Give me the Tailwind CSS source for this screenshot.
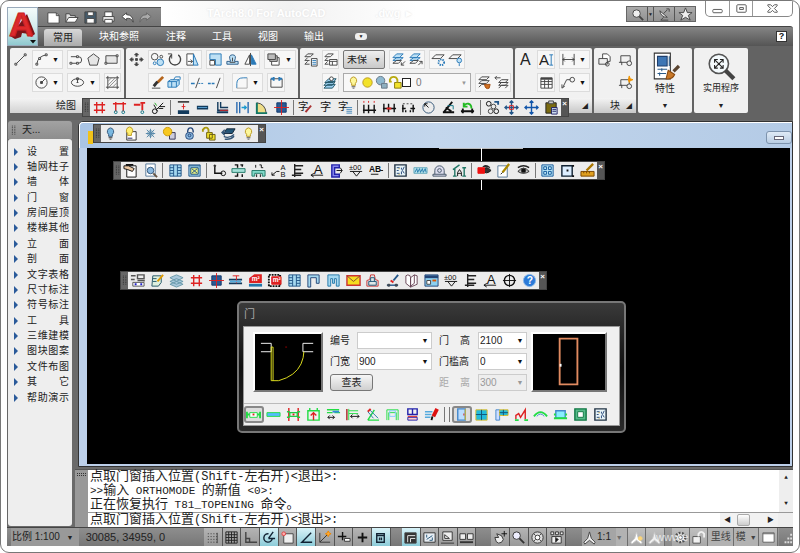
<!DOCTYPE html>
<html lang="zh-CN">
<head>
    <meta charset="UTF-8">
    <meta name="viewport" content="width=device-width, initial-scale=1.0">
    <title>TArch 8.0 For AutoCAD</title>
    <script src="https://cdn.jsdelivr.net/npm/@tailwindcss/browser@4"></script>
</head>
<body class="bg-white font-['Liberation_Sans','Noto_Sans_CJK_SC',sans-serif] text-[10px] leading-none text-[#222]">

<div class="flex h-screen min-h-[553px] flex-col overflow-hidden rounded-[9px] border border-[#777] bg-white px-[6px] pb-[6px]">

    <!-- Title bar and ribbon tabs -->
    <header class="flex shrink-0">
        <button aria-label="应用程序菜单" class="mt-[6px] h-[39px] w-[31px] shrink-0 border border-[#9ab] bg-linear-to-b from-[#f4fbfb] via-[#d5ecee] to-[#8fc9cf]">
            <svg viewBox="0 0 29 37" class="h-[37px] w-[29px]" font-family="Liberation Sans" font-weight="bold" font-size="34">
                <path d="M2 28l5 3 6-2 1-4 7 1 2 3 4-3-8-20z" fill="#7c1418"/>
                <text x="1" y="28" fill="#dd2a2c" stroke="#c92024" stroke-width="1">A</text>
                <path d="M22 32h6l-3 3.500z" fill="#111"/>
            </svg>
        </button>
        <div class="min-w-0 flex-1">
            <div class="flex h-[25px] items-start">
                <div data-tools="new open save print undo redo" class="mt-[6px] flex h-[19px] w-[123px] shrink-0 items-center border-t border-[#555] bg-linear-to-b from-[#8b8b8b] to-[#777] px-[6px]"></div>
                <div class="flex h-[25px] flex-1 items-center bg-linear-to-r from-white via-[#f2f2f2] to-white pl-[46px] text-[11px] font-bold text-white">
                    <span class="text-shadow-[0_0_2px_#ddd]">TArch8.0 For AutoCAD</span>
                    <span class="ml-auto pr-1 text-shadow-[0_0_2px_#ddd]">.dwg &nbsp;▸</span>
                </div>
                <div class="flex-1"></div>
                <div class="mt-[5px] flex h-[16px] w-[70px] shrink-0 divide-x divide-[#555] border border-[#666] bg-linear-to-b from-[#aaa] to-[#929292]">
                    <button aria-label="搜索" data-icon="search" class="flex flex-1 items-center justify-center"></button>
                    <button aria-label="搜索选项" class="w-[6px] text-[5px]">▼</button>
                    <button aria-label="通讯中心" data-icon="dish" class="flex flex-1 items-center justify-center"></button>
                    <button aria-label="收藏夹" data-icon="star" class="flex flex-1 items-center justify-center"></button>
                </div>
                <div class="ml-[9px] flex h-[16px] w-[88px] shrink-0 divide-x divide-[#999] rounded-b-[5px] border border-t-0 border-[#888] bg-white">
                    <button aria-label="最小化" data-icon="wmin" class="flex w-[24px] items-center justify-center"></button>
                    <button aria-label="还原" data-icon="wmax" class="flex w-[23px] items-center justify-center"></button>
                    <button aria-label="关闭" data-icon="wclose" class="flex flex-1 items-center justify-center"></button>
                </div>
            </div>
            <nav class="flex h-[20px] items-center rounded-tr-[3px] border-t border-[#444] bg-linear-to-b from-[#858585] to-[#555] pl-[6px] text-white">
                <button class="mt-[2px] h-[18px] w-[38px] rounded-t-[3px] bg-linear-to-b from-[#d8d8d8] to-[#a9a9a9] text-[#222]">常用</button>
                <button class="ml-[17px]">块和参照</button>
                <button class="ml-[27px]">注释</button>
                <button class="ml-[26px]">工具</button>
                <button class="ml-[26px]">视图</button>
                <button class="ml-[26px]">输出</button>
                <button aria-label="最小化功能区" class="ml-[31px] h-[7px] w-[12px] rounded-[3px] bg-[#eee] text-[5px] leading-[7px] text-[#222]">▼</button>
                <button aria-label="帮助" class="mr-[6px] ml-auto size-[11px] border border-[#333] bg-white text-[9px] leading-[9px] font-bold text-[#111]">?</button>
            </nav>
        </div>
    </header>

    <!-- Ribbon -->
    <section class="relative flex h-[74px] shrink-0 items-start gap-[2px] bg-[#636363] pt-[2px] pl-[3px]">
        <div class="h-[65px] w-[114px] shrink-0 rounded-[2px] bg-[#f1f1f1]">
            <div class="flex h-[50px] flex-col gap-1 pt-[2px] pl-[2px]">
                <div class="flex gap-1">
                    <div data-tools="line" class="flex h-[19px] w-[16px]"></div>
                    <div data-tools="arc v" class="flex h-[19px] w-[31px] border border-[#dcdcdc] bg-[#f7f7f7]"></div>
                    <div data-tools="pline polygon rect" class="flex h-[19px] w-[54px] border border-[#dcdcdc] bg-[#f7f7f7]"></div>
                </div>
                <div class="flex gap-1 pl-[20px]">
                    <div data-tools="circle v" class="flex h-[19px] w-[31px] border border-[#dcdcdc] bg-[#f7f7f7]"></div>
                    <div data-tools="ellipse v" class="flex h-[19px] w-[33px] border border-[#dcdcdc] bg-[#f7f7f7]"></div>
                    <div data-tools="hatch" class="flex h-[19px] w-[17px] border border-[#dcdcdc] bg-[#f7f7f7]"></div>
                </div>
            </div>
            <div class="flex h-[15px] items-center bg-linear-to-b from-[#f4f4f4] to-[#d2d2d2] pl-[46px]">绘图</div>
        </div>
        <div class="h-[65px] w-[172px] shrink-0 rounded-[2px] bg-[#f1f1f1]">
            <div class="flex flex-col gap-1 pt-[2px] pl-[2px]">
                <div class="flex gap-1">
                    <div data-tools="move" class="flex h-[19px] w-[16px]"></div>
                    <div data-tools="copy rotate stretch" class="flex h-[19px] w-[54px] border border-[#dcdcdc] bg-[#f7f7f7]"></div>
                    <div data-tools="scale offset mirror" class="flex h-[19px] w-[54px] border border-[#dcdcdc] bg-[#f7f7f7]"></div>
                    <div data-tools="order v" class="flex h-[19px] w-[32px] border border-[#dcdcdc] bg-[#f7f7f7]"></div>
                </div>
                <div class="flex gap-1 pl-[20px]">
                    <div data-tools="erase explode" class="flex h-[19px] w-[36px] border border-[#dcdcdc] bg-[#f7f7f7]"></div>
                    <div data-tools="trim extend" class="flex h-[19px] w-[36px] border border-[#dcdcdc] bg-[#f7f7f7]"></div>
                    <div data-tools="fillet v" class="ml-1 flex h-[19px] w-[31px] border border-[#dcdcdc] bg-[#f7f7f7]"></div>
                    <div data-tools="break" class="flex h-[19px] w-[18px] border border-[#dcdcdc] bg-[#f7f7f7]"></div>
                </div>
            </div>
        </div>
        <div class="h-[65px] w-[213px] shrink-0 rounded-[2px] bg-[#f1f1f1]">
            <div class="flex flex-col gap-1 pt-[2px] pl-[2px]">
                <div class="flex gap-1">
                    <div data-tools="layerprop" class="flex h-[19px] w-[16px]"></div>
                    <div data-tools="layerstate" class="flex h-[19px] w-[17px] border border-[#dcdcdc] bg-[#f7f7f7]"></div>
                    <div class="relative h-[19px] w-[42px]">
                        <select aria-label="图层状态" class="h-full w-full appearance-none rounded-[2px] border border-[#777] bg-linear-to-b from-[#eee] to-[#c9c9c9] pl-[3px] text-[10px]"><option>未保</option></select>
                        <span class="pointer-events-none absolute top-[6px] right-[4px] text-[7px]">▼</span>
                    </div>
                    <div data-tools="layerin layerout" class="flex h-[19px] w-[36px] border border-[#dcdcdc] bg-[#f7f7f7]"></div>
                    <div data-tools="layerfrz layeroff" class="flex h-[19px] w-[36px] border border-[#dcdcdc] bg-[#f7f7f7]"></div>
                </div>
                <div class="flex gap-1 pl-[20px]">
                    <div data-tools="layerset" class="flex h-[19px] w-[17px] border border-[#dcdcdc] bg-[#f7f7f7]"></div>
                    <button aria-label="图层" class="flex h-[19px] w-[128px] items-center border border-[#aaa] bg-[#f8f8f8] pl-[2px] text-[#777]">
                        <span data-icon="bulb" class="-mr-px"></span><span data-icon="sun" class="-mr-px"></span><span data-icon="sunvp" class="-mr-px"></span><span data-icon="lock" class="-mr-px"></span>
                        <span class="size-[9px] border border-[#222] bg-white"></span>
                        <span class="ml-[5px]">0</span>
                        <span class="mr-[3px] ml-auto text-[6px] text-[#999]">▼</span>
                    </button>
                    <div data-tools="layermatch layerprev" class="flex h-[19px] w-[36px] border border-[#dcdcdc] bg-[#f7f7f7]"></div>
                </div>
            </div>
        </div>
        <div class="h-[65px] w-[77px] shrink-0 rounded-[2px] bg-[#f1f1f1]">
            <div class="flex h-[50px] flex-col gap-1 pt-[2px] pl-[2px]">
                <div class="flex gap-1">
                    <div data-tools="text" class="flex h-[19px] w-[16px]"></div>
                    <div data-tools="mtext" class="flex h-[19px] w-[18px] border border-[#dcdcdc] bg-[#f7f7f7]"></div>
                    <div data-tools="dim v" class="flex h-[19px] w-[31px] border border-[#dcdcdc] bg-[#f7f7f7]"></div>
                </div>
                <div class="flex gap-1 pl-[20px]">
                    <div data-tools="table" class="flex h-[19px] w-[18px] border border-[#dcdcdc] bg-[#f7f7f7]"></div>
                    <div data-tools="leader v" class="flex h-[19px] w-[31px] border border-[#dcdcdc] bg-[#f7f7f7]"></div>
                </div>
            </div>
            <div class="flex h-[15px] items-center justify-end bg-linear-to-b from-[#f4f4f4] to-[#c8c8c8] pr-[4px] text-[6px]">◢</div>
        </div>
        <div class="h-[65px] w-[42px] shrink-0 rounded-[2px] bg-[#f1f1f1]">
            <div class="grid h-[50px] grid-cols-2 gap-y-1 pt-[2px] pb-[6px]">
                <div data-tools="blkins" class="flex"></div>
                <div data-tools="blkmake" class="flex"></div>
                <div data-tools="blkedit" class="col-start-2 flex"></div>
            </div>
            <div class="flex h-[15px] items-center justify-end gap-[6px] bg-linear-to-b from-[#f4f4f4] to-[#c8c8c8] pr-[4px]">块<span class="text-[6px]">◢</span></div>
        </div>
        <button class="flex h-[65px] w-[54px] shrink-0 flex-col items-center rounded-[2px] bg-[#f1f1f1] pt-[3px]">
            <span data-icon="props" data-size="big"></span>
            <span class="mt-[3px]">特性</span>
            <span class="mt-[8px] text-[7px]">▼</span>
        </button>
        <button class="flex h-[65px] w-[54px] shrink-0 flex-col items-center rounded-[2px] bg-[#f1f1f1] pt-[3px]">
            <span data-icon="util" data-size="big"></span>
            <span class="mt-[3px] text-[9px]">实用程序</span>
            <span class="mt-[9px] text-[7px]">▼</span>
        </button>

        <div data-float="grid gridred wallred branch | wallmid wall wallcorner wallmove door column | zibrush zi zitable | dimred dimmid dimbrk dimrad dimang dimloop | chain moveplus movearrow paste" class="absolute top-[52px] left-[75px] z-10 flex h-[19px] w-[487px] border border-[#444] bg-[#ececec]"></div>
    </section>

    <div class="flex min-h-0 flex-1 bg-[#6a6a6a]">
        <!-- Screen menu -->
        <aside class="flex w-[65px] shrink-0 flex-col border-l border-[#666] pt-px pb-px">
            <h2 class="flex h-[18px] items-center gap-[5px] rounded-t-[3px] bg-linear-to-b from-[#a2a2a2] to-[#8d8d8d] pl-[3px]"><span data-icon="grip" data-size="grip"></span>天...</h2>
            <div class="flex-1 rounded-[3px] bg-[#eee] pt-[5px]">
                <ul id="menu" class="flex h-[261px] flex-col justify-between"></ul>
            </div>
        </aside>

        <main class="flex min-w-0 flex-1 flex-col pl-[3px]">
            <!-- Drawing window -->
            <div class="relative mt-px ml-[3px] min-h-0 flex-1 rounded-tl-[5px] border border-[#333] bg-[#bdd0ea]">
                <div class="flex h-[26px] items-center justify-end rounded-tl-[4px] border-t border-l border-white bg-linear-to-r from-[#a9c4e4] via-[#c3d6ec] to-[#b4cbe6]">
                    <span class="mt-[4px] mr-auto ml-[8px] h-[13px] w-[5px] bg-[#f1c21a]"></span>
                    <button aria-label="最小化图形" class="mt-[4px] flex h-[13px] w-[26px] items-center justify-center rounded-[3px] border border-[#7d93ad] bg-linear-to-b from-[#dfeaf6] to-[#b9cde3]"><span class="h-[4px] w-[10px] border border-[#667] bg-white"></span></button>
                </div>
                <div class="absolute top-[26px] right-[2px] bottom-[2px] left-[8px] bg-black">
                    <!-- crosshair -->
                    <div class="absolute top-0 left-[50%] h-px w-[84px] bg-[#bbb]"></div>
                    <div class="absolute top-0 left-[56%] h-[42px] w-px bg-white"></div>
                </div>

                <div data-float="bulbblue bulbbox snow sunbox lockblue locky layerback bulb" class="absolute top-[2px] left-[14px] flex h-[19px] w-[173px] border border-[#444] bg-[#ececec]"></div>
                <div data-float="hand preview | tblblue boxblue | node cutwall bridge leadab ladder arrowa doorpur elev ab | tblbox wave arch house | eyered note eye | maze frame rulerpen" class="absolute top-[39px] left-[34px] flex h-[19px] w-[492px] border border-[#444] bg-[#ececec]"></div>
                <div data-float="listbox notegreen layers grid column wallmove2 m2 m2box tblblue wallu wallm envelope stamp brushdot book tbl3 elev ladder arrowa north help" class="absolute top-[149px] left-[41px] flex h-[19px] w-[427px] border border-[#444] bg-[#ececec]"></div>

                <!-- Door dialog -->
                <div role="dialog" aria-label="门" class="absolute top-[179px] left-[158px] w-[389px] rounded-[5px] border-2 border-[#777] bg-linear-to-b from-[#3a3a3a] via-[#111] to-[#2a2a2a] px-1 pb-[5px]">
                    <h3 class="flex h-[23px] items-center pl-px text-[11px] text-[#aaa]">门</h3>
                    <div class="border border-[#999] bg-[#f0f0f0]">
                        <div class="flex h-[76px] items-start pt-[5px] pl-[9px]">
                            <svg viewBox="0 0 70 60" class="h-[60px] w-[70px] shrink-0 border-2 border-t-white border-r-[#777] border-b-[#777] border-l-white bg-black" fill="none">
                                <path d="M6 10h11v9H6M62 10H51v9h11" stroke="#fff"/>
                                <path d="M17 14v36h8q18-5 24-18 3-7 3-13M19 14v36M17 14h2" stroke="#e8e820"/>
                                <path d="M32 14h2" stroke="#900"/>
                            </svg>
                            <div class="ml-[7px] grid grid-cols-[27px_75px] gap-y-1">
                                <label for="no" class="self-center">编号</label>
                                <div data-combo="no" data-value="" class="relative h-[17px]"></div>
                                <label for="width" class="self-center">门宽</label>
                                <div data-combo="width" data-value="900" class="relative h-[17px]"></div>
                                <button class="col-span-2 h-[17px] w-[43px] rounded-[3px] border border-[#777] bg-linear-to-b from-[#f6f6f6] to-[#d0d0d0]">查表</button>
                            </div>
                            <div class="ml-[7px] grid grid-cols-[39px_49px] gap-y-1">
                                <label for="height" class="mr-[8px] flex justify-between self-center"><span>门</span><span>高</span></label>
                                <div data-combo="height" data-value="2100" class="relative h-[17px]"></div>
                                <label for="sill" class="self-center">门槛高</label>
                                <div data-combo="sill" data-value="0" class="relative h-[17px]"></div>
                                <label for="dist" class="mr-[8px] flex justify-between self-center text-[#aaa]"><span>距</span><span>离</span></label>
                                <div data-combo="dist" data-value="300" data-off="1" class="relative h-[17px]"></div>
                            </div>
                            <svg viewBox="0 0 76 60" class="ml-[4px] h-[60px] w-[76px] shrink-0 border-2 border-t-white border-r-[#777] border-b-[#777] border-l-white bg-black" fill="none">
                                <path d="M28 5h19v49H28z" stroke="#e08a60" stroke-width="2"/>
                                <path d="M28 32h2v3h-2z" fill="#fff"/>
                            </svg>
                        </div>
                        <div data-tools="*d1 d2 d3 d4 d5 d6 d7 d8 d9 d10 | | *w1 w2 w3 w4 w5 w6 w7 tblbox" class="flex h-[22px] w-[366px] items-center border-t border-[#bbb]"></div>
                    </div>
                </div>
            </div>

            <!-- Command line -->
            <div class="mt-[2px] flex h-[58px] shrink-0 border-t border-[#555]">
                <div class="w-[13px] shrink-0 bg-[#999] pt-[3px] pl-[2px]"><div class="h-[3px] w-[9px] border-y border-dotted border-[#333]"></div></div>
                <div class="flex min-w-0 flex-1 flex-col bg-white font-['Liberation_Mono','Noto_Sans_CJK_SC',monospace] text-[13px] leading-[14px]">
                    <div class="flex h-[42px]">
                        <div class="flex-1 pl-[2px]">
                            <p class="h-[14px] whitespace-pre">点取门窗插入位置<span class="text-[12px]">(Shift-</span>左右开<span class="text-[12px]">)&lt;</span>退出<span class="text-[12px]">&gt;:</span></p>
                            <p class="h-[14px] whitespace-pre"><span class="text-[11px]">&gt;&gt;</span>输入<span class="text-[11px]"> ORTHOMODE </span>的新值<span class="text-[11px]"> &lt;0&gt;:</span></p>
                            <p class="h-[14px] whitespace-pre">正在恢复执行<span class="text-[11px]"> T81_TOPENING </span>命令。</p>
                        </div>
                        <div class="flex w-[14px] flex-col items-center justify-between bg-[#eee] py-1 text-[6px] leading-[8px]"><span>▲</span><span>▼</span></div>
                    </div>
                    <div class="flex h-[15px] border-t border-[#999]">
                        <label for="cmd" class="pl-[2px] whitespace-pre">点取门窗插入位置<span class="text-[12px]">(Shift-</span>左右开<span class="text-[12px]">)&lt;</span>退出<span class="text-[12px]">&gt;:</span></label>
                        <input id="cmd" type="text" class="min-w-0 flex-1 outline-none">
                        <div class="flex w-[58px] items-center justify-between bg-[#f2f2f2] px-1 text-[7px]"><span>◀</span><span class="h-[12px] w-[13px] rounded-[2px] border border-[#aaa] bg-linear-to-b from-white to-[#ccc]"></span><span class="pl-3">▶</span></div>
                        <div class="w-[15px] bg-[#eee]"></div>
                    </div>
                </div>
            </div>
        </main>
    </div>

    <!-- Status bar -->
    <footer class="relative flex h-[19px] shrink-0 items-center border-t border-[#444] bg-linear-to-b from-[#8e8e8e] to-[#777]">
        <button class="ml-[4px] h-full w-[68px] bg-[#999] pl-px text-left">比例 1:100 <span class="pl-[4px] text-[7px]">▼</span></button>
        <span class="w-[126px] pl-[7px] text-[11px]">30085, 34959, 0</span>
        <div data-status="snap sgrid ortho *polar osnap *otrack ducs dyn lwt *qp" class="flex h-full w-[188px]"></div>
        <div data-status="*model layout1 qlayout qdraw" class="ml-[11px] flex h-full w-[75px]"></div>
        <div data-status="pan zoom wheel motion" class="ml-[15px] flex h-full w-[75px]"></div>
        <button class="ml-[16px] flex h-full w-[46px] items-center border-r border-[#555] bg-[#a5a5a5]"><span data-icon="anno"></span>1:1<span class="ml-auto pr-1 text-[7px] text-[#555]">▼</span></button>
        <div data-status="annobulb annoadd" class="flex h-full w-[37px]"></div>
        <div data-status="gear slock" class="ml-[7px] flex h-full w-[37px]"></div>
        <button class="h-full w-[26px] border-r border-[#555] bg-[#a5a5a5]">里线</button>
        <button class="h-full w-[25px] border-r border-[#555] bg-[#a5a5a5] whitespace-nowrap">模<span class="pl-1 text-[7px]">▼</span></button>
        <div data-status="clean" class="flex h-full w-[19px]"></div>
        <span data-icon="resize" class="ml-auto"></span>
        <!-- watermark -->
        <div class="pointer-events-none absolute top-0 right-[14px] flex h-[18px] w-[163px] items-center bg-white/15 pl-[40px] text-[11px] text-white/70">www.e</div>
    </footer>
</div>

<script>
    // Icon artwork, 16x16 unless noted
    const icons = {
        new: '<path d="M2 3h9l3 3v8H2z" fill="#fff"/><path d="M11 3v3h3"/>',
        open: '<path d="M2 13V4h4l1 2h5v2" fill="#ddd"/><path d="M2 13l3-5h10l-3 5z" fill="#fff"/>',
        save: '<path d="M2 2h12v12H2z" fill="#445b6c"/><path d="M5 2h6v4H5zM4 9h8v5H4z" fill="#fff"/>',
        print: '<path d="M4 7V2h8v5" fill="#fff"/><path d="M2 7h12v5H2z" fill="#eee"/><path d="M4 10h8v4H4z" fill="#fff"/>',
        undo: '<path d="M7 3L2 7l5 4V9q5-1 7 4 0-8-7-8z" fill="#fff"/>',
        redo: '<path d="M9 3l5 4-5 4V9q-5-1-7 4 0-8 7-8z" fill="#aaa" stroke="#666"/>',
        search: '<circle cx="7" cy="7" r="4" fill="#eee"/><path d="M10 10l4 4" stroke-width="2"/>',
        dish: '<path d="M3 4q1 7 8 7z" fill="#eee"/><path d="M7 7l4-4M10 2h3v3M7 11l-3 3h8"/>',
        star: '<path d="M8 1l2 5h5l-4 3 2 5-5-3-5 3 2-5-4-3h5z" fill="#eee"/>',
        wmin: '<rect x="3" y="9" width="10" height="3.500" rx="1" stroke="#555"/>',
        wmax: '<rect x="3" y="4" width="10" height="8" rx="1" stroke="#555"/><path d="M6 7h4v2H6z" stroke="#555"/>',
        wclose: '<path d="M3 4h3l2 2 2-2h3v1l-3 3 3 3v1h-3l-2-2-2 2H3v-1l3-3-3-3z" stroke="#555"/>',
        grip: '<path d="M1 2v12M4 2v12" stroke="#222" stroke-dasharray="1 1"/>',
        line: '<path d="M3 13L13 3"/><path d="M2 12h2v2H2zM12 2h2v2h-2z" fill="#fff"/>',
        arc: '<path d="M3 13Q4 4 14 3"/><path d="M2 12h2v2H2zM5 6h2v2H5zM12 2h2v2h-2z" fill="#fff"/>',
        pline: '<path d="M2 5h8a3.500 3.500 0 010 7H3"/><path d="M1 11h2v2H1zM8 4h2v2H8zM8 11h2v2H8z" fill="#fff"/>',
        polygon: '<path d="M8 2l6 4.500L12 14H4L2 6.500z" fill="#e6e6e6"/>',
        rect: '<path d="M2 4h12v8H2z" fill="#e6e6e6"/><path d="M1 11h2v2H1zM13 3h2v2h-2z" fill="#fff"/>',
        circle: '<circle cx="8" cy="8" r="6"/><path d="M8 8l4-4"/><path d="M7 7h2v2H7z" fill="#444"/>',
        ellipse: '<ellipse cx="8" cy="8" rx="6.500" ry="4"/><path d="M8 4v4M7 8h2M7 3h2v2H7z"/>',
        hatch: '<path d="M3 1v14M13 1v14M1 3h14M1 13h14"/><path d="M3 7l4-4M3 11l8-8M4 13l9-9M8 13l5-5" stroke="#888"/>',
        move: '<path d="M8 2v3M8 11v3M2 8h3M11 8h3" stroke-width="2"/><path d="M6 3l2-2 2 2zM6 13l2 2 2-2zM3 6L1 8l2 2zM13 6l2 2-2 2zM7 7h2v2H7z" fill="#444"/>',
        copy: '<circle cx="5" cy="5" r="3.500"/><circle cx="12" cy="5" r="1.500"/><circle cx="5" cy="12" r="1.500" stroke="#2a7ab8"/><circle cx="11" cy="11" r="3.500" fill="#bde0f5" stroke="#2a7ab8"/>',
        rotate: '<path d="M5 3a6 6 0 107 0" stroke-width="1.500"/><path d="M5 7V2H1" />',
        stretch: '<path d="M2 2h7v12H2z" fill="#fff"/><path d="M9 2l5 12H9z" fill="#bde0f5" stroke="#2a7ab8"/><path d="M3 10h5M6 8l2 2-2 2"/>',
        scale: '<path d="M2 2h12v12H8V8H2z" fill="#bde0f5" stroke="#2a7ab8"/><path d="M2 9h5v5H2z" fill="#fff"/>',
        offset: '<path d="M2 13h12v-3h-4q3-7-2-7T6 10H2z" fill="#bde0f5" stroke="#2a5a88"/><path d="M5 11h6M8 6v4"/>',
        mirror: '<path d="M7 3v10H2z" fill="#fff"/><path d="M9 3v10h5z" fill="#2a7ab8" stroke="#2a7ab8"/><path d="M8 1v14"/>',
        order: '<path d="M6 6h8v8H6z" fill="#fff"/><path d="M4 4h8v6H4z" fill="#bbb"/><path d="M2 2h8v6H2z" fill="#bbb"/>',
        erase: '<path d="M14 2L8 8" stroke="#b5651d" stroke-width="3"/><path d="M8 7l-4 5" stroke="#333" stroke-width="3"/><path d="M2 14h9"/>',
        explode: '<path d="M1 7l3-2h9v5l-3 3H1z" fill="#bde0f5" stroke="#2a7ab8"/><path d="M1 7h9v6M5 7v6M10 7l3-2M7 5l2-3h5v3" stroke="#2a7ab8"/>',
        trim: '<path d="M1 9h4" stroke="#2a7ab8" stroke-width="1.500"/><path d="M10 3L6 14"/><path d="M9 9h6" stroke-dasharray="2 1" stroke="#2a7ab8"/>',
        extend: '<path d="M1 9h8" stroke-dasharray="3 1" stroke="#2a7ab8" stroke-width="1.500"/><path d="M14 3l-4 11"/>',
        fillet: '<path d="M3 14V9q0-6 7-6h4" stroke="#2a7ab8"/><path d="M3 14h11V3" stroke="#aaa"/>',
        break: '<path d="M2 13V4h12v9z"/><path d="M2 4h3M11 4h3M5 2v4M11 2v4" stroke="#2a7ab8" stroke-width="2"/>',
        layerprop: '<path d="M2 5l3-3h6L8 5zM2 9l3-3M2 9h5M2 13l3-3M2 13h5"/><path d="M9 7h6v8H9z" fill="#fff"/><path d="M10 9h4M10 11h4M10 13h4" stroke="#2a7ab8"/>',
        layerstate: '<path d="M2 5l3-3h6L8 5zM2 9l3-3M2 9h4M2 13l3-3M2 13h4"/><path d="M7 8h8v6H7z" fill="#fff"/><path d="M7 10h8M10 10v4"/>',
        layerin: '<path d="M2 6l4-4h7L9 6zM2 9l4-3h7L9 9z" fill="#bde0f5" stroke="#2a7ab8"/><path d="M2 12l4-3h5l-3 3zM15 10l-4 4M11 11v3h3"/>',
        layerout: '<path d="M2 6l4-4h7L9 6zM2 9l4-3h7L9 9z" fill="#bde0f5" stroke="#2a7ab8"/><path d="M2 12l4-3h5l-3 3zM11 14l4-4M12 10h3v3"/>',
        layerfrz: '<path d="M1 7l4-4h9l-4 4z"/><circle cx="11" cy="11" r="3" stroke="#2a7ab8" stroke-dasharray="1.500 1" stroke-width="2"/>',
        layeroff: '<path d="M1 7l4-4h9l-4 4z"/><circle cx="12" cy="9" r="2.500" fill="#bde0f5" stroke="#2a7ab8"/><path d="M12 12v3" stroke="#2a7ab8"/>',
        layerset: '<path d="M1 14l4-4h8l-3 4zM1 11l4-4h8l-3 4zM2 8l4-4h8l-3 4z" fill="#9cd0f0" stroke="#256"/><circle cx="9" cy="4" r="2" fill="#fff"/>',
        layermatch: '<path d="M2 5l3-3h8l-3 3zM2 9l3-3h8l-3 3zM2 13l3-3h4"/><path d="M8 10l6 0-1 4q-4 2-5-4z" fill="#d07020" stroke="#a04c10"/>',
        layerprev: '<path d="M5 8l3-3h7l-3 3zM5 11l3-3h7l-3 3zM5 14l3-3h7l-3 3M1 3h6M3 1L1 3l2 2"/>',
        bulb: '<path d="M8 2a4 4 0 00-2 7v2h4V9a4 4 0 00-2-7z" fill="#fdf79a" stroke="#b9961e"/><path d="M6 12.500h4M7 14h2" stroke="#555"/>',
        sun: '<circle cx="8" cy="8" r="5" fill="#f2e22a" stroke="#b99a1e"/>',
        sunvp: '<circle cx="7" cy="6" r="4.500" fill="#8fb9d0" stroke="#678"/><path d="M8 9h6v5H8z" fill="#8fb0c0" stroke="#678"/>',
        lock: '<path d="M7 8h7v6H7z" fill="#f2e22a" stroke="#887a10"/><path d="M10 8V5q-1-3-4-3T2 5v2h2" stroke="#b8aa10" stroke-width="2"/>',
        text: '<text x="2" y="14" font-size="17" fill="#222" stroke="none">A</text>',
        mtext: '<text x="0" y="14" font-size="16" fill="#222" stroke="none">A</text><path d="M13 3v11M11 3h4M11 14h4" stroke="#2a7ab8"/>',
        dim: '<path d="M2 2v12M14 2v12M2 8h12M4 6L2 8l2 2M12 6l2 2-2 2"/>',
        table: '<path d="M2 3h12v11H2z" fill="#fff"/><path d="M2 4h12" stroke-width="2"/><path d="M2 7h12M2 10h12M6 5v9M10 5v9"/>',
        leader: '<path d="M2 13L6 5h4M1 10v4l3-2"/><circle cx="12" cy="5" r="2.500"/>',
        blkins: '<path d="M6 2h5l3 3v5H6z" fill="#fff"/><path d="M2 7h9v6H2z" fill="#eee"/><circle cx="11" cy="13" r="2"/>',
        blkmake: '<path d="M3 4h10v7H3zM1 11h3v3"/><circle cx="12" cy="12" r="2.500" fill="#eee"/>',
        blkedit: '<path d="M3 5h9v6H3zM1 11h3v3"/><circle cx="12" cy="12" r="2.500" fill="#eee"/><path d="M12 1l1 3 3 1-3 1-1 2-1-3z" fill="#f80" stroke="#e90"/>',
        // 28x28
        props: '<path d="M4 2h15v24H4z" fill="#fff" stroke="#333"/><path d="M7 5h9v9H7z" fill="#3e76b4" stroke="#1e3e6c"/><path d="M18 5v9M7 17h9M7 21h8M11 16v3M9 20v3" stroke="#2a5a88"/><path d="M27 14l-5 5" stroke="#5a4430" stroke-width="3"/><path d="M17 18l6 4q-2 5-8 4z" fill="#c87828" stroke="#8a4a10"/>',
        util: '<circle cx="12" cy="12" r="9" fill="#f4fafd" stroke="#555" stroke-width="1.500"/><path d="M8 8l8 8M16 8l-8 8M8 11V8h3M13 8h3v3M16 13v3h-3M11 16H8v-3" stroke="#222"/><path d="M18 18l8 8" stroke="#444" stroke-width="4"/>',
        // plan drawing tools
        grid: '<path d="M5 2v12M11 2v12M2 5h12M2 11h12" stroke="#d22" stroke-width="1.500"/>',
        gridred: '<path d="M4 2v10M12 2v10M1 4h14" stroke="#d22" stroke-width="1.500"/><circle cx="4" cy="13" r="1.500" stroke="#178"/><circle cx="12" cy="13" r="1.500" stroke="#178"/>',
        wallred: '<path d="M2 5h7M14 3H9M11 3v8" stroke="#d22" stroke-width="2"/><circle cx="11" cy="13" r="1.500" stroke="#178"/>',
        branch: '<path d="M3 5l4 7M13 3L6 10M9 7h6M8 9h5" stroke="#111"/><circle cx="4" cy="12" r="2.500" stroke="#111"/><path d="M4 3l2 3" stroke="#2a2"/>',
        wallmid: '<path d="M2 2h12" stroke-width="2"/><path d="M2 13h12" stroke="#123a5c" stroke-width="4"/><path d="M8 4v6M6 7h4" stroke="#d22"/>',
        wall: '<path d="M2 8h12" stroke="#123a5c" stroke-width="4"/><path d="M3 8h10" stroke="#5ba0d0"/>',
        wallcorner: '<path d="M3 2v9h11M6 2v6h8" stroke="#123a5c" stroke-width="1.500"/><path d="M5 11h9" stroke="#d22"/><path d="M2 13h12" stroke="#123a5c" stroke-width="2"/>',
        wallmove: '<path d="M2 2v12M5 2v12M14 2v12" stroke="#2a6ab0" stroke-width="1.500"/><path d="M7 8h5M10 6l2 2-2 2" stroke="#1a9ad0" stroke-width="1.500"/>',
        wallmove2: '<path d="M1 7h14M1 11h14" stroke="#123a5c" stroke-width="2"/><path d="M5 3h7M9 3v8" stroke="#d22"/><path d="M2 9h12" stroke="#5ad" stroke-width="2"/>',
        door: '<path d="M3 14V3q9 1 10 11" fill="#eedd88"/><path d="M2 14h12M3 3v11" stroke="#176" stroke-width="2"/>',
        column: '<path d="M3 3h10v10H3z" fill="#2a5a94" stroke="#123a6c"/><path d="M8 0v16M0 8h16" stroke="#d22"/>',
        zibrush: '<text x="0" y="11" font-size="11" fill="#111" stroke="none">字</text><path d="M14 6L8 13" stroke="#a33" stroke-width="2"/>',
        zi: '<text x="2" y="12" font-size="12" fill="#111" stroke="none">字</text>',
        zitable: '<text x="0" y="11" font-size="11" fill="#111" stroke="none">字</text><path d="M9 8h6M9 10h6M9 12h6M9 14h6" stroke="#48b"/>',
        dimred: '<path d="M2 5v9M7 5v9M13 5v9M1 11h14" stroke="#111" stroke-width="1.500"/><path d="M2 1v2M7 1v2M13 1v2" stroke="#d22"/>',
        dimmid: '<path d="M2 4v9M7 4v9M13 4v9M1 9h14" stroke="#111" stroke-width="1.500"/><path d="M5 9h5" stroke="#d22" stroke-width="2"/>',
        dimbrk: '<path d="M2 5v8M13 5v8M1 9h4M10 9h5M5 13v-2M10 13v-2" stroke="#111" stroke-width="1.500"/><path d="M2 4h11" stroke-dasharray="2 2"/>',
        dimrad: '<circle cx="8" cy="8" r="6" stroke="#357"/><path d="M8 8L4 4M4 7V4h3" stroke="#111"/>',
        dimang: '<path d="M2 13h12M3 13L12 2M5 8l6 4" stroke="#111" stroke-width="2"/><path d="M7 6h6v4" stroke="#178"/>',
        dimloop: '<path d="M3 9v5M13 9v5M1 12h14" stroke="#111" stroke-width="2"/><path d="M4 7a4 4 0 118 2M4 3v4h4" stroke="#2b2" stroke-width="2"/>',
        chain: '<circle cx="4" cy="4" r="2.500" stroke="#111"/><circle cx="9" cy="7" r="2.500"/><circle cx="6" cy="12" r="2.500"/><circle cx="12" cy="12" r="2.500" stroke="#111"/><path d="M10 2h4v3" stroke="#258" stroke-width="2"/>',
        moveplus: '<path d="M8 1v14M1 8h14M6 3l2-2 2 2M6 13l2 2 2-2M3 6L1 8l2 2M13 6l2 2-2 2" stroke="#258" stroke-width="1.500"/><path d="M6 6h4v4H6z" stroke="#d22"/>',
        movearrow: '<path d="M8 1v14M1 8h14M6 3l2-2 2 2M6 13l2 2 2-2M3 6L1 8l2 2M13 6l2 2-2 2" stroke="#15a" stroke-width="1.500"/>',
        paste: '<path d="M2 3h11v11H2z" fill="#7a6a10" stroke="#222"/><path d="M5 1h5v3H5z" fill="#ccc"/><path d="M8 8h6v7H8z" fill="#cde" stroke="#226"/><path d="M9 10h4M9 12h4" stroke="#226"/>',
        // layer tools
        bulbblue: '<path d="M8 2a4 4 0 00-2 7v2h4V9a4 4 0 00-2-7z" fill="#7ab8e0" stroke="#357"/><path d="M6 12.500h4M7 14h2" stroke="#333"/>',
        bulbbox: '<path d="M4 6h10v9H4z" fill="#fff" stroke="#333"/><path d="M7 1a4 4 0 00-2 7v2h4V8a4 4 0 00-2-7z" fill="#ffef70" stroke="#b9961e"/><path d="M5 13h5" stroke="#226"/>',
        snow: '<path d="M8 3v10M3 8h10M4 4l8 8M12 4l-8 8" stroke="#58a"/><circle cx="8" cy="8" r="3" stroke="#58a"/>',
        sunbox: '<path d="M8 7h6v7H8z" fill="#ccd" stroke="#335"/><circle cx="6" cy="6" r="4.500" fill="#f8c820" stroke="#c90"/>',
        lockblue: '<rect x="4" y="7" width="8" height="7" rx="3" fill="#8ab8e0" stroke="#247"/><path d="M6 7q0-5 3-5t3 5" stroke="#247" stroke-width="1.500"/><circle cx="8" cy="10" r="1.500" stroke="#247"/>',
        locky: '<path d="M6 7h6v6H6zM9 9h6v6H9z" fill="#f2e22a" stroke="#665a10"/><path d="M8 7V4q-1-3-4-2L2 4v2" stroke="#aa9a10" stroke-width="2"/>',
        layerback: '<path d="M3 8l3-5 9 0-3 5z" fill="#257" stroke="#123"/><path d="M3 11q5 3 11-2M4 14q6 1 10-3M9 7H1M4 4L1 7l3 3" stroke="#357" stroke-width="1.500"/>',
        // main tools
        hand: '<path d="M4 3h10v12H4z" fill="#fff" stroke="#111"/><path d="M1 3h5l6 3-2 3-5-2-4-1z" fill="#edc9a4" stroke="#111"/><path d="M3 2h8" stroke="#111" stroke-width="2"/>',
        preview: '<path d="M3 1h10v13H3z" fill="#fff" stroke="#579"/><circle cx="8" cy="8" r="3.500" fill="#8ab8e0" stroke="#357"/><path d="M11 11l4 4" stroke="#654" stroke-width="2"/>',
        tblblue: '<path d="M2 2h12v12H2z" fill="#a4d8f0" stroke="#258"/><path d="M6 2v12M10 2v12M2 5h4M10 5h4M2 8h4M10 8h4M2 11h4M10 11h4" stroke="#258"/>',
        boxblue: '<path d="M2 2h12v12H2z" fill="#a4d8f0" stroke="#258"/><path d="M4 5h8v7H4z" fill="#e8f080" stroke="#258"/><path d="M5 6l6 5M11 6l-6 5M2 3h12" stroke="#258"/>',
        node: '<path d="M3 2v9h8" stroke="#111" stroke-width="1.500"/><circle cx="3" cy="3" r="1" fill="#111"/><circle cx="12" cy="11" r="2.500" stroke="#111"/>',
        cutwall: '<path d="M1 6h14v4H1z" fill="#a4e0d8" stroke="#276"/><path d="M4 2h3v3M4 14h3v-3M10 2h3M12 2v2M12 12v3" stroke="#111" stroke-width="1.500"/>',
        bridge: '<path d="M1 8h14v6h-3v-3H4v3H1z" fill="#80d8c8" stroke="#276"/><path d="M5 2v3M9 2h2v3h2M6 12v3M10 12v3" stroke="#111"/>',
        leadab: '<path d="M1 13l5-4h3M1 10v3h3" stroke="#111"/><text x="10" y="7" font-size="8" fill="#111" stroke="none">A</text><text x="10" y="15" font-size="8" fill="#111" stroke="none">B</text>',
        ladder: '<path d="M5 1v14M5 3h9M5 7h7M5 11h9M2 13h10" stroke="#222" stroke-width="1.500"/>',
        arrowa: '<text x="4" y="12" font-size="14" fill="#111" stroke="none">A</text><path d="M1 13h13M4 11l-3 2 3 2" stroke="#111"/>',
        doorpur: '<path d="M3 2h8v3H6v7h5v3H3z" fill="#88e" stroke="#22a" stroke-width="1.500"/><path d="M8 8h6M12 5l2 3-2 3" stroke="#111"/>',
        elev: '<text x="0" y="7" font-size="8" fill="#111" stroke="none">±00</text><path d="M1 9h13M4 9l4 5 4-5" stroke="#111"/>',
        ab: '<text x="0" y="10" font-size="9" fill="#111" stroke="none" font-weight="bold">AB</text><path d="M2 12h8M12 8h3" stroke="#111"/>',
        tblbox: '<path d="M2 2h12v12H2z" fill="#e8f4f8" stroke="#234" stroke-width="1.500"/><path d="M4 5h3M4 8h2M4 11h3M9 5v2M9 9v3M12 4l-2 4 2 3" stroke="#247"/><path d="M6 6h1M6 12h1" stroke="#b80"/>',
        wave: '<path d="M1 5h14v6H1z" fill="#bde8f0" stroke="#6ab"/><path d="M2 10l2-4 1 4 2-4 1 4 2-4 1 4 2-4 1 4" stroke="#27a"/>',
        arch: '<path d="M3 12V8a5 5 0 0110 0v4M1 12h14v2H1z" fill="#dde" stroke="#456"/><circle cx="8" cy="8" r="2" stroke="#456"/>',
        house: '<path d="M1 7l7-5M3 14V5M13 14V5M11 5h4M1 14h4M11 14h4" stroke="#276" stroke-width="1.500"/><path d="M6 14v-4l2-3 2 3v4M6 11h4" stroke="#111"/>',
        eyered: '<path d="M5 8q5-6 10 0-5 5-10 0zM6 4q4-3 8 1" fill="#333" stroke="#111"/><path d="M1 5h7v6H1z" fill="#e11" stroke="#e11"/>',
        note: '<path d="M2 3h10v12H2z" fill="#fff" stroke="#579"/><path d="M14 1l-7 9" stroke="#a80" stroke-width="2.500"/><path d="M5 12l2-2" stroke="#111"/>',
        eye: '<path d="M2 9q6-7 12 0-6 4-12 0z" fill="#ccc" stroke="#222"/><circle cx="8" cy="8" r="2.500" fill="#111"/><path d="M2 5q6-4 12 0" stroke="#222" stroke-width="1.500"/>',
        maze: '<path d="M2 2h12v12H2z" fill="#bde8f8" stroke="#159"/><path d="M4 4h3v3H4zM9 4h3v3H9zM4 9h3v3H4zM9 9h3v3H9z" stroke="#159"/>',
        frame: '<path d="M2 3h11v11H2z" fill="#def" stroke="#123" stroke-width="1.500"/><path d="M13 3h2M13 14h2M7 8h2" stroke="#111" stroke-width="2"/>',
        rulerpen: '<path d="M1 9h14v5H1z" fill="#e0a020" stroke="#740"/><path d="M4 9v2M7 9v2M10 9v2" stroke="#740"/><path d="M14 1L7 8" stroke="#a70" stroke-width="2.500"/>',
        listbox: '<path d="M1 3h5M8 2h7v4H8zM1 7h4M8 8h7v1" stroke="#555" stroke-width="1.500"/><path d="M3 10h12v4H3z" fill="#fff" stroke="#555"/><path d="M5 12h2M11 12h2" stroke="#22c" stroke-width="2"/>',
        notegreen: '<path d="M3 3h9v7l-3 4H2z" fill="#dff0e0" stroke="#256"/><path d="M14 2l-6 7" stroke="#d90" stroke-width="2"/><path d="M3 6h4M3 9h4" stroke="#256"/>',
        layers: '<path d="M1 12l7 3 7-3-7-3zM1 9l7 3 7-3-7-3zM1 5l7 4 7-4-7-3z" fill="#a9c8dc" stroke="#69a"/>',
        m2: '<path d="M2 6l5-4h7v8H2z" fill="#d22" stroke="#d22" stroke-width="1.500"/><text x="4" y="9" font-size="7" fill="#fff" stroke="none" font-weight="bold">m²</text><path d="M1 13h14" stroke="#27a" stroke-width="3"/>',
        m2box: '<path d="M2 2h12v12H2z" fill="#fff" stroke="#111" stroke-dasharray="2 1" stroke-width="2"/><path d="M5 4h10v8H5z" fill="#d22" stroke="#d22"/><text x="6" y="10" font-size="7" fill="#fff" stroke="none" font-weight="bold">m²</text>',
        wallu: '<path d="M2 15V2h12v9h-3V5H5v10z" fill="#a4d8f0" stroke="#247"/>',
        wallm: '<path d="M2 14V2h12v12h-3V6H9v5H7V6H5v8z" fill="#a4d8f0" stroke="#27a"/>',
        envelope: '<path d="M1 3h14v10H1z" fill="#f5dd20" stroke="#c33" stroke-width="1.500"/><path d="M1 3l7 6 7-6" stroke="#843"/>',
        stamp: '<path d="M2 14V8l3-1 1-5h4l1 5 3 1v6z" fill="#dfe8e8" stroke="#c33"/><path d="M4 13V9h8v4zM6 9V5h4v4" stroke="#257"/>',
        brushdot: '<path d="M14 2l-5 6" stroke="#258" stroke-width="2"/><path d="M6 8l3 2" stroke="#d22" stroke-width="2"/><path d="M2 13h12" stroke="#258" stroke-width="1.500"/><path d="M3 12h2v2H3zM11 12h2v2h-2z" fill="#258"/>',
        book: '<path d="M2 3v8l5 4V5q0-3-3-3zM7 5l4-3 3 1v9l-7 3z" fill="#fff" stroke="#645"/><path d="M11 2v9l-4 3" stroke="#645"/>',
        tbl3: '<path d="M1 2h14v12H1z" fill="#8cd0f0" stroke="#247"/><path d="M1 4h14" stroke="#247" stroke-width="3"/><path d="M3 8h4v4H3z" fill="#fff"/><path d="M9 8h4" stroke="#d50" stroke-width="2"/>',
        north: '<circle cx="8" cy="8" r="5.500" stroke="#111" stroke-width="1.500"/><path d="M8 1v14M1 8h14" stroke="#111"/>',
        help: '<circle cx="8" cy="8" r="6.500" fill="#2b7ad8" stroke="#8ab8e8"/><text x="5" y="12" font-size="11" fill="#fff" stroke="none" font-weight="bold">?</text>',
        // door dialog tools
        d1: '<path d="M1 5v7M15 5v7M1 8h14" stroke="#2d4" stroke-width="2"/><path d="M4 6h8v5H4z" fill="#fff" stroke="#2d4"/><path d="M7 8h2" stroke="#d22" stroke-width="2"/>',
        d2: '<path d="M1 6h14v4H1z" fill="#5bf" stroke="#2d4"/>',
        d3: '<path d="M3 1v14M13 1v14" stroke="#d22" stroke-width="1.500"/><path d="M1 5h3M12 5h3M1 11h3M12 11h3M4 6h8v4H4z" stroke="#2c4" stroke-width="1.500"/><path d="M7 8h2" stroke="#d22" stroke-width="2"/>',
        d4: '<path d="M2 4h12v10H2zM4 1v3M12 1v3" stroke="#2d4" stroke-width="1.500"/><path d="M8 14V6M5 9l3-3 3 3" stroke="#d22" stroke-width="1.500"/>',
        d5: '<path d="M1 3h13M1 6h6M9 6h6" stroke="#2d4" stroke-width="1.500"/><path d="M7 5h7" stroke="#38d" stroke-width="2"/><path d="M2 11h7M4 9l-2 2 2 2M7 9l2 2-2 2" stroke="#111"/>',
        d6: '<path d="M2 2v12" stroke="#a22" stroke-width="1.500"/><path d="M4 2v12M4 4h10M4 7h10" stroke="#2d4"/><path d="M6 10h9M8 8l-2 2 2 2M13 8l2 2-2 2" stroke="#111"/>',
        d7: '<path d="M3 14L10 3M3 14h12" stroke="#2d4" stroke-width="1.500"/><path d="M5 3l9 9M3 5l6 7" stroke="#27a"/><path d="M3 5l3-3" stroke="#d22" stroke-width="2"/>',
        d8: '<path d="M2 14V3h12v11M4 14V6h8v8" stroke="#2d4"/><path d="M5 4h6v6H5z" stroke="#8cf"/>',
        d9: '<path d="M3 2h10v6H3zM8 2v6" stroke="#22a" stroke-width="1.500"/><path d="M3 11h10v3H3z" fill="#fcc" stroke="#22a"/><path d="M3 10h10" stroke="#d22"/>',
        d10: '<path d="M1 5h8M1 8h7M1 11h6" stroke="#5ad" stroke-width="1.500"/><path d="M14 2l-4 8" stroke="#d11" stroke-width="4"/><path d="M9 10l-1 4" stroke="#111" stroke-width="2"/>',
        w1: '<path d="M4 2h8v12H4z" fill="#bdf" stroke="#48c" stroke-width="1.500"/><path d="M12 2v12" stroke="#db2"/><path d="M10 8h1" stroke="#d22" stroke-width="2"/>',
        w2: '<path d="M2 3h12v11H2z" fill="#2bd" stroke="#db2"/><path d="M8 3v11M2 8h12" stroke="#157"/>',
        w3: '<path d="M2 3h4v11H2z" fill="#cdf" stroke="#48c"/><path d="M6 3h9v6H6z" fill="#2bd" stroke="#db2"/><path d="M10 3v6M6 6h9" stroke="#157"/>',
        w4: '<path d="M2 13V9l3-2 2 4 5-8v10" stroke="#d22" stroke-width="1.500"/><path d="M1 14h4M11 14h4" stroke="#2d4" stroke-width="2"/>',
        w5: '<path d="M1 10q7-9 14 0" stroke="#2d4" stroke-width="2"/><path d="M4 10q4-5 8 0" stroke="#48c"/>',
        w6: '<path d="M3 4h10v8H3z" fill="#8ef" stroke="#48c" stroke-width="1.500"/><path d="M1 12h14M1 8h2M13 8h2" stroke="#2d4" stroke-width="2"/>',
        w7: '<path d="M2 2h12v12H2z" fill="#5b8" stroke="#174" stroke-width="1.500"/><path d="M5 5h6v6H5z" fill="#fff" stroke="#174"/>',
        // status bar
        snap: '<path d="M3 4h10M3 7h10M3 10h10M3 13h10" stroke="#333" stroke-dasharray="1 2"/><path d="M13 3v11"/>',
        sgrid: '<path d="M2 2h12v12H2zM5 2v12M8 2v12M11 2v12M2 5h12M2 8h12M2 11h12" stroke="#222"/>',
        ortho: '<path d="M3 2v11h12M3 9h4v4" stroke="#444" stroke-width="1.500"/>',
        polar: '<path d="M12 9a4.500 4.500 0 11-4-5" stroke="#123" stroke-width="1.500"/><path d="M8 9l5-7M8 9h7" stroke="#123" stroke-width="1.500"/>',
        osnap: '<path d="M4 4h10v10H4z" fill="#eee" stroke="#444"/><circle cx="4" cy="4" r="2" fill="#faa" stroke="#d44"/>',
        otrack: '<path d="M13 3L3 13h11" stroke="#123" stroke-width="1.500"/>',
        ducs: '<path d="M3 3v10h11M3 13l8-8" stroke="#333"/><path d="M12 1l1 2 2 1-2 1-1 2-1-2-2-1 2-1z" fill="#fa3" stroke="#e80"/>',
        dyn: '<path d="M7 2v9M2 7h9" stroke="#111" stroke-width="1.500"/><path d="M9 9h6v3H9z" fill="#fff" stroke="#333"/>',
        lwt: '<path d="M8 3v10M3 8h10" stroke="#111" stroke-width="2"/>',
        qp: '<path d="M4 4h8v9H4zM4 6h8M7 8v3M9 8v3" stroke="#123" stroke-width="1.500"/>',
        model: '<path d="M2 3h12v11H2z" fill="#333"/><path d="M5 13V6h8M8 13V9h5" stroke="#eee"/>',
        layout1: '<path d="M2 3h12v10H2z" fill="#e8eef4" stroke="#333"/><path d="M5 5v3M5 10l6-4M8 11h3V8" stroke="#257"/>',
        qlayout: '<path d="M3 2h10v9H3z" fill="#eee" stroke="#333"/><path d="M5 9V5l5 4zM1 14h14" stroke="#333"/>',
        qdraw: '<path d="M1 4h6v6H1zM9 4h6v6H9z" fill="#eee" stroke="#333"/><path d="M1 13h14" stroke="#333" stroke-width="2"/>',
        pan: '<path d="M2 8l4 0-2-4 5 2 2 4q-1 4-5 4-3 0-4-6z" fill="#eee" stroke="#333"/><path d="M12 1v6M9 4h6" stroke="#111"/>',
        zoom: '<circle cx="6" cy="6" r="4" fill="#eef" stroke="#333"/><path d="M9 9l5 5" stroke="#333" stroke-width="2"/>',
        wheel: '<circle cx="8" cy="8" r="6" fill="#ddd" stroke="#333"/><circle cx="8" cy="8" r="2.500" fill="#fff"/><path d="M4 4l2 2M12 4l-2 2M4 12l2-2M12 12l-2-2"/>',
        motion: '<path d="M2 2h3v3H2zM7 2h3v3H7zM12 2h3v3h-3zM3 7h10v7H3z" fill="#eee" stroke="#333"/><path d="M7 8l3 2-3 3z" fill="#111"/>',
        anno: '<path d="M8 2l2 7 4 4-1 2-5-4-5 4-1-2 4-4z" fill="#eee" stroke="#444"/>',
        annobulb: '<path d="M8 2l2 7 4 4-1 2-5-4-5 4-1-2 4-4z" fill="#fff" stroke="#bbb"/><circle cx="12" cy="9" r="2" fill="#fc6" stroke="#ec6"/>',
        annoadd: '<path d="M8 2l2 7 4 4-1 2-5-4-5 4-1-2 4-4z" fill="#eee" stroke="#bbb"/>',
        gear: '<circle cx="8" cy="8" r="5" fill="#ddd" stroke="#333" stroke-width="2.500" stroke-dasharray="2 1.500"/><circle cx="8" cy="8" r="2" fill="#fff"/>',
        slock: '<path d="M2 7h8v7H2z" fill="#eee" stroke="#333"/><path d="M8 7V4q3-4 6 0v4" stroke="#eee" stroke-width="2"/>',
        clean: '<path d="M2 3h12v10H2z" fill="#fff" stroke="#444"/><path d="M2 4h12" stroke="#444"/>',
        resize: '<path d="M13 5h2M10 9h2M13 9h2M7 13h2M10 13h2M13 13h2" stroke="#ddd" stroke-width="2"/>'
    };

    function svg(name, size) {
        if (size === 'big') return `<svg viewBox="0 0 28 28" class="size-[30px] fill-none">${icons[name]}</svg>`;
        if (size === 'grip') return `<svg viewBox="0 0 6 16" class="h-[13px] w-[6px] fill-none">${icons[name]}</svg>`;
        return `<svg viewBox="0 0 16 16" class="size-[15px] shrink-0 fill-none stroke-[#444]">${icons[name]}</svg>`;
    }

    // "|" is a separator, "v" a drop-down arrow, "*" marks a pressed button
    function tools(list) {
        return list.split(' ').map(n => {
            if (n === '|') return '<i class="mx-[2px] h-[15px] w-px shrink-0 self-center bg-[#777]"></i>';
            if (n === 'v') return '<button aria-label="更多" class="w-[13px] shrink-0 text-[7px] text-[#111]">▼</button>';
            if (n[0] === '*') return `<button title="${n.slice(1)}" class="flex h-[17px] min-w-0 flex-1 items-center justify-center rounded-[3px] bg-[#ddd] ring-2 ring-[#888] ring-inset">${svg(n.slice(1))}</button>`;
            return `<button title="${n}" class="flex min-w-0 flex-1 items-center justify-center">${svg(n)}</button>`;
        }).join('');
    }

    document.querySelectorAll('[data-tools]').forEach(el => el.innerHTML = tools(el.dataset.tools));

    document.querySelectorAll('[data-float]').forEach(el => {
        el.innerHTML = `<span class="flex w-[7px] shrink-0 items-center justify-center bg-[#666]">${svg('grip', 'grip')}</span>`
            + tools(el.dataset.float)
            + '<button aria-label="关闭" class="flex w-[7px] shrink-0 items-start justify-center bg-[#555] text-[8px] leading-[9px] font-bold text-white">×</button>';
    });

    document.querySelectorAll('[data-status]').forEach(el => {
        el.innerHTML = el.dataset.status.split(' ').map(n => n[0] === '*'
            ? `<button title="${n.slice(1)}" class="flex min-w-0 flex-1 items-center justify-center border-r border-[#555] bg-linear-to-b from-[#d8f2f8] to-[#8ccbd8]">${svg(n.slice(1))}</button>`
            : `<button title="${n}" class="flex min-w-0 flex-1 items-center justify-center border-r border-[#555] bg-linear-to-b from-[#b4b4b4] to-[#999]">${svg(n)}</button>`).join('');
    });

    document.querySelectorAll('[data-icon]').forEach(el => el.innerHTML = svg(el.dataset.icon, el.dataset.size));

    document.querySelectorAll('[data-combo]').forEach(el => {
        const { combo, value, off } = el.dataset;
        el.innerHTML = `<input id="${combo}" type="text" value="${value}" ${off ? 'disabled' : ''} class="h-full w-full border border-[#ccc] bg-white pl-px text-[10px] disabled:bg-[#eee] disabled:text-[#999]">`
            + `<button aria-label="选择" class="absolute top-0 right-[2px] h-full w-[10px] text-[7px] ${off ? 'text-[#999]' : 'text-[#111]'}">▼</button>`;
    });

    const items = ['设置', '轴网柱子', '墙体', '门窗', '房间屋顶', '楼梯其他', '立面', '剖面', '文字表格', '尺寸标注', '符号标注', '工具', '三维建模', '图块图案', '文件布图', '其它', '帮助演示'];
    document.getElementById('menu').innerHTML = items.map(t => `
        <li class="h-[15px]"><a href="#" class="flex h-full items-center pl-[6px]">
            <svg viewBox="0 0 4 8" class="mr-[9px] h-[8px] w-[4px] shrink-0 fill-[#2a5a9a]"><path d="M0 0l4 4-4 4z"/></svg>
            <span class="flex w-[42px] justify-between">${[...t].map(c => `<span>${c}</span>`).join('')}</span>
        </a></li>`).join('');
</script>
</body>
</html>
